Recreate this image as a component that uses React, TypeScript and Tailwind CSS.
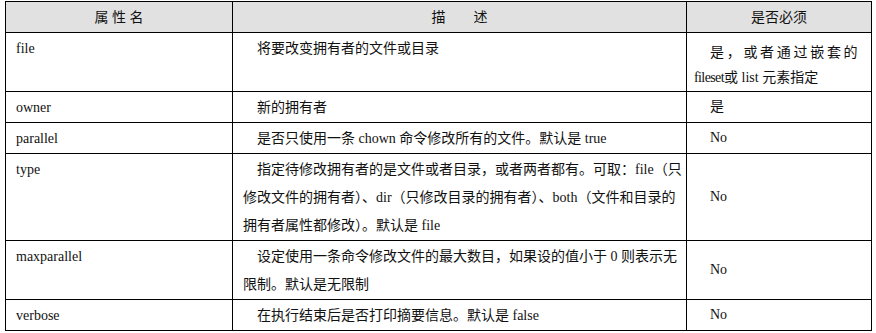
const ROWS = [
  {
    name: "file",
    desc: ["将要改变拥有者的文件或目录"],
    req: null as string | null,
    h: "h-[59px]",
  },
  { name: "owner", desc: ["新的拥有者"], req: "是", h: "h-[31px]" },
  {
    name: "parallel",
    desc: ["是否只使用一条 chown 命令修改所有的文件。默认是 true"],
    req: "No",
    h: "h-[30px]",
  },
  {
    name: "type",
    desc: [
      "指定待修改拥有者的是文件或者目录，或者两者都有。可取：file（只",
      "修改文件的拥有者）、dir（只修改目录的拥有者）、both（文件和目录的",
      "拥有者属性都修改）。默认是 file",
    ],
    req: "No",
    h: "h-[87px]",
  },
  {
    name: "maxparallel",
    desc: ["设定使用一条命令修改文件的最大数目，如果设的值小于 0 则表示无", "限制。默认是无限制"],
    req: "No",
    h: "h-[59px]",
  },
  {
    name: "verbose",
    desc: ["在执行结束后是否打印摘要信息。默认是 false"],
    req: "No",
    h: "h-[30px]",
  },
];

export default function App() {
  return (
    <div className="w-[876px] h-[333px] bg-white pt-[1px] pl-[5px] text-[14px] text-[#111] font-[family-name:'Liberation_Serif','Noto_Sans_CJK_SC',serif]">
      <table className="table-fixed border-collapse w-[866px]">
        <colgroup>
          <col className="w-[227px]" />
          <col className="w-[454px]" />
          <col className="w-[185px]" />
        </colgroup>
        <thead>
          <tr className="h-[31px] bg-[#e1e1e1]">
            <th className="border border-black font-normal text-center align-middle">属 性 名</th>
            <th className="border border-black font-normal text-center align-middle">描　　述</th>
            <th className="border border-black font-normal text-center align-middle">是否必须</th>
          </tr>
        </thead>
        <tbody>
          {ROWS.map((r) => (
            <tr key={r.name} className={r.h}>
              <td className="border border-black align-top pl-[10px] pt-[2px] leading-[28px] whitespace-nowrap">
                {r.name}
              </td>
              <td className="border border-black align-top pl-[10px] pt-[2px] leading-[28px] whitespace-nowrap">
                {r.desc.map((line, i) => (
                  <div key={i} className={i === 0 ? "indent-[14px]" : ""}>
                    {line}
                  </div>
                ))}
              </td>
              {r.req === null ? (
                <td className="border border-black align-top pl-[7px] pt-[7px] leading-[25px] whitespace-nowrap">
                  <div className="indent-[16px] tracking-[2.7px]">是，或者通过嵌套的</div>
                  <div>
                    <span className="tracking-[-0.6px]">fileset</span>或 list 元素指定
                  </div>
                </td>
              ) : (
                <td className="border border-black align-middle pl-[23px] leading-[28px] whitespace-nowrap">
                  {r.req}
                </td>
              )}
            </tr>
          ))}
        </tbody>
      </table>
    </div>
  );
}
